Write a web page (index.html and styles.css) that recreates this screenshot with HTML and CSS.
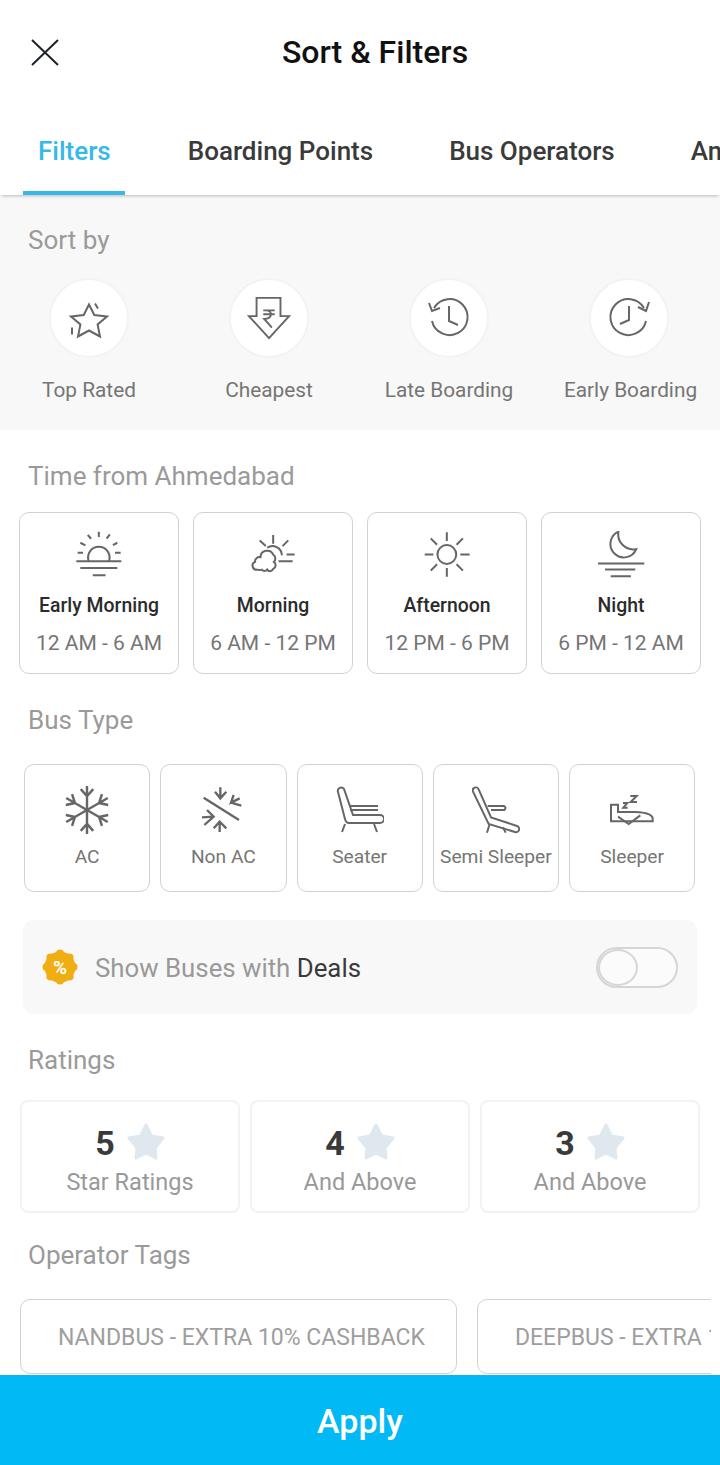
FILE: index.html
```html
<!DOCTYPE html>
<html lang="en">
<head>
    <meta charset="UTF-8">
    <meta name="viewport" content="width=device-width, initial-scale=1.0">
    <title>Sort &amp; Filters</title>
    <link rel="stylesheet" href="styles.css">
</head>
<body>
    <!-- Top bar -->
    <div class="top-bar">
        <svg class="close-icon" viewBox="0 0 28 27"><path d="M1 1 L27 26 M27 1 L1 26"/></svg>
        <h1>Sort &amp; Filters</h1>
    </div>

    <div class="tabs">
        <div class="tab active">Filters</div>
        <div class="tab">Boarding Points</div>
        <div class="tab">Bus Operators</div>
        <div class="tab">Amenities</div>
    </div>

    <!-- Sort by -->
    <div class="sort-section">
        <div class="label">Sort by</div>
        <div class="sort-row">
            <div class="sort-item">
                <div class="circle">
                    <svg class="line-icon thin" viewBox="-3 -3.5 44 44"><path d="M19 5 L24.3 15.5 L37 17 L27.6 25 L30 37 L19 31 L8 37 L10.4 25 L1 17 L13.7 15.5 Z"/><path d="M25 4 L28 9 M2 28 L2 35"/></svg>
                </div>
                <span>Top Rated</span>
            </div>
            <div class="sort-item">
                <div class="circle">
                    <svg class="line-icon thin" viewBox="0 0 46 46"><path d="M10 2 H35 V21 H44 L23 44 L2 21 H10 Z"/><path d="M17 15 H29 M17 19 H29 M20 15 C27 15 27 24 18 24 L26 33"/></svg>
                </div>
                <span>Cheapest</span>
            </div>
            <div class="sort-item">
                <div class="circle">
                    <svg class="line-icon thin" viewBox="-1 -1 44 44"><path d="M6 11 A18 18 0 1 1 4 24"/><path d="M1 6 L4 14 L12 11"/><path d="M21 9 V24 L30 28"/></svg>
                </div>
                <span>Late Boarding</span>
            </div>
            <div class="sort-item">
                <div class="circle">
                    <svg class="line-icon thin" viewBox="-1 -1 44 44"><path d="M36 11 A18 18 0 1 0 38 24"/><path d="M41 5 L38 14 L30 10"/><path d="M21 9 V23 L12 27"/></svg>
                </div>
                <span>Early Boarding</span>
            </div>
        </div>
    </div>

    <!-- Time -->
    <div class="label time-label">Time from Ahmedabad</div>
    <div class="time-row">
        <div class="time-card">
            <svg class="line-icon" viewBox="227 80 140 140"><path d="M265 170 A32 32 0 1 1 325 170"/><path d="M228 170 H362 M240 190 H350 M277 212 H315 M295 82 V98 M262 92 L272 103 M328 90 L318 103 M240 115 L255 123 M350 115 L337 122 M232 145 H248 M343 145 H360"/></svg>
            <div class="time-name">Early Morning</div>
            <div class="time-hours">12 AM - 6 AM</div>
        </div>
        <div class="time-card">
            <svg class="line-icon" viewBox="751 80 140 140"><path d="M802 130 A28 28 0 0 1 846 152 M820 92 V118 M780 108 L798 125 M865 108 L848 125 M860 150 H884 M836 170 H878"/><path d="M772 195 A12 12 0 0 1 766 172 A13 13 0 0 1 782 158 A20 20 0 0 1 820 150 A14 14 0 0 1 822 172 A12 12 0 0 1 820 193 A10 10 0 0 1 802 195 A10 10 0 0 1 786 195 Q780 197 772 195 Z"/></svg>
            <div class="time-name">Morning</div>
            <div class="time-hours">6 AM - 12 PM</div>
        </div>
        <div class="time-card">
            <svg class="line-icon" viewBox="190 78 140 140"><circle cx="258" cy="148" r="28"/><path d="M258 82 V108 M258 188 V214 M192 148 H218 M298 148 H326 M210 100 L229 119 M306 100 L287 119 M210 196 L229 177 M306 196 L287 177"/></svg>
            <div class="time-name">Afternoon</div>
            <div class="time-hours">12 PM - 6 PM</div>
        </div>
        <div class="time-card">
            <svg class="line-icon" viewBox="714 80 140 140"><path d="M775 82 A40 40 0 1 0 828 134 A45 45 0 0 1 775 82 Z"/><path d="M712 177 H852 M735 195 H825 M752 215 H812"/></svg>
            <div class="time-name">Night</div>
            <div class="time-hours">6 PM - 12 AM</div>
        </div>
    </div>

    <!-- Bus type -->
    <div class="label bus-label">Bus Type</div>
    <div class="bus-row">
        <div class="bus-card">
            <svg class="bus-icon line-icon heavy" viewBox="-69 -69 138 138">
                <g id="flake"><path d="M0 0 V-69 M-18 -60 L0 -40 L18 -60"/></g>
                <use href="#flake" transform="rotate(60)"/>
                <use href="#flake" transform="rotate(120)"/>
                <use href="#flake" transform="rotate(180)"/>
                <use href="#flake" transform="rotate(240)"/>
                <use href="#flake" transform="rotate(300)"/>
            </svg>
            <span>AC</span>
        </div>
        <div class="bus-card">
            <svg class="bus-icon line-icon heavy" viewBox="568 78 144 144"><path d="M582 113 L688 180 M632 82 V118 M616 95 L632 115 L650 95 M630 216 V182 M612 205 L630 185 L650 205 M695 137 L664 128 M672 105 L664 128 L690 115 M577 172 L612 170 M584 195 L612 170 L592 150"/></svg>
            <span>Non AC</span>
        </div>
        <div class="bus-card">
            <svg class="bus-icon line-icon seat" viewBox="334 787 48 48"><path d="M336 793 A3.4 3.4 0 0 1 342 790 L351 816 H378 A4 4 0 0 1 378 824 H347 Q344 824 343 820 Z"/><path d="M347 807 H376 M348 811 H376"/><path d="M343 825 L340 833 M372 825 L375 833"/></svg>
            <span>Seater</span>
        </div>
        <div class="bus-card">
            <svg class="bus-icon line-icon" viewBox="335 78 144 144"><path d="M338 95 A9 9 0 0 1 355 88 L392 172 L470 198 A8 8 0 0 1 464 216 L385 192 Z"/><path d="M382 138 H430 Q440 142 432 150 H392"/><path d="M387 195 L380 218 M428 202 L436 218"/></svg>
            <span>Semi Sleeper</span>
        </div>
        <div class="bus-card">
            <svg class="bus-icon line-icon" viewBox="748 80 144 144"><path d="M757 136 H778 V158 H830 Q878 160 882 176 V186 H757 Z"/><path d="M778 172 L810 194 L845 168"/><path d="M793 131 H806 L794 145 H807 M815 110 H834 L816 128 H835"/></svg>
            <span>Sleeper</span>
        </div>
    </div>

    <!-- Deals -->
    <div class="deals">
        <svg class="deal-badge" viewBox="-18 -18 36 36">
            <circle r="15.5"/>
            <circle cy="-13.5" r="4"/><circle cy="13.5" r="4"/><circle cx="-13.5" r="4"/><circle cx="13.5" r="4"/>
            <circle cx="-9.6" cy="-9.6" r="4"/><circle cx="9.6" cy="-9.6" r="4"/><circle cx="-9.6" cy="9.6" r="4"/><circle cx="9.6" cy="9.6" r="4"/>
            <text y="6.5" text-anchor="middle">%</text>
        </svg>
        <div class="deal-text">Show Buses with <b>Deals</b></div>
        <div class="toggle"><div class="knob"></div></div>
    </div>

    <!-- Ratings -->
    <div class="label ratings-label">Ratings</div>
    <div class="rating-row">
        <div class="rating-card">
            <div class="rating-num">5 <svg class="star" viewBox="0 0 38 37"><path d="M19 2 L24.5 13 L36 15 L28 25 L29 35 L19 30 L9 35 L10 25 L2 15 L13.5 13 Z"/></svg></div>
            <div class="rating-text">Star Ratings</div>
        </div>
        <div class="rating-card">
            <div class="rating-num">4 <svg class="star" viewBox="0 0 38 37"><path d="M19 2 L24.5 13 L36 15 L28 25 L29 35 L19 30 L9 35 L10 25 L2 15 L13.5 13 Z"/></svg></div>
            <div class="rating-text">And Above</div>
        </div>
        <div class="rating-card">
            <div class="rating-num">3 <svg class="star" viewBox="0 0 38 37"><path d="M19 2 L24.5 13 L36 15 L28 25 L29 35 L19 30 L9 35 L10 25 L2 15 L13.5 13 Z"/></svg></div>
            <div class="rating-text">And Above</div>
        </div>
    </div>

    <!-- Operator tags -->
    <div class="label tags-label">Operator Tags</div>
    <div class="tag-row">
        <div class="tag">NANDBUS - EXTRA 10% CASHBACK</div>
        <div class="tag">DEEPBUS - EXTRA 10% CASHBACK</div>
    </div>

    <div class="apply">Apply</div>
</body>
</html>
```

FILE: styles.css
```css
* {
    box-sizing: border-box;
}
html, body {
    margin: 0;
    padding: 0;
}
body {
    width: 720px;
    height: 1465px;
    overflow: hidden;
    background-color: #fff;
    font-family: Roboto, "Noto Sans", sans-serif;
}
.top-bar {
    height: 104px;
    display: flex;
    align-items: center;
    justify-content: center;
    position: relative;
}
.top-bar h1 {
    margin: 0 0 0 30px;
    font-size: 32px;
    font-weight: 500;
    color: #111;
}
.close-icon {
    position: absolute;
    left: 31px;
    top: 39px;
    width: 28px;
    height: 27px;
    fill: none;
    stroke: #1d2228;
    stroke-width: 2;
}
.tabs {
    height: 91px;
    padding-left: 23px;
    display: flex;
    gap: 46px;
    overflow: hidden;
    position: relative;
    box-shadow: 0 3px 3px -2px rgba(0, 0, 0, 0.25);
    white-space: nowrap;
}
.tab {
    padding: 32px 15px 0;
    font-size: 26px;
    line-height: 30px;
    font-weight: 500;
    color: #3a3a3a;
}
.tab.active {
    padding-right: 14px;
    margin-right: 2px;
    color: #36b8ea;
    border-bottom: 4px solid #36b8ea;
}
.label {
    padding-left: 28px;
    font-size: 26px;
    line-height: 31px;
    color: #9a9a9a;
}
.sort-section {
    height: 235px;
    padding-top: 30px;
    background-color: #f8f8f8;
}
.sort-row {
    margin-top: 22px;
    display: grid;
    grid-template-columns: repeat(4, 178px);
    gap: 2px;
}
.sort-item {
    display: flex;
    flex-direction: column;
    align-items: center;
    font-size: 20.8px;
    line-height: 30px;
    color: #757575;
    white-space: nowrap;
}
.sort-item span {
    margin-top: 17px;
}
.sort-item:last-child span {
    margin-left: 3px;
}
.circle {
    width: 80px;
    height: 80px;
    border-radius: 50%;
    background-color: #fff;
    border: 2px solid #f3f3f3;
    display: flex;
    align-items: center;
    justify-content: center;
}
.circle svg {
    width: 44px;
    height: 44px;
}
.line-icon {
    fill: none;
    stroke: #666;
    stroke-width: 6;
}
.line-icon.thin {
    stroke-width: 2;
}
.line-icon.heavy {
    stroke-width: 7;
}
.line-icon.seat {
    stroke-width: 2;
}
.time-label {
    margin-top: 31px;
}
.time-row {
    margin-top: 20px;
    padding: 0 19px;
    display: flex;
    gap: 14px;
}
.time-card {
    width: 160px;
    height: 162px;
    padding-top: 18px;
    border: 1px solid #d2d2d2;
    border-radius: 10px;
    display: flex;
    flex-direction: column;
    align-items: center;
}
.time-card svg {
    width: 47px;
    height: 47px;
}
.time-name {
    margin-top: 16px;
    font-size: 19.4px;
    line-height: 24px;
    font-weight: 500;
    color: #2b2b2b;
}
.time-hours {
    margin-top: 11px;
    font-size: 21px;
    line-height: 28px;
    color: #757575;
}
.bus-label {
    margin-top: 31px;
}
.bus-row {
    margin-top: 28px;
    padding: 0 24px;
    display: flex;
    gap: 10px;
}
.bus-card {
    flex: none;
    width: 126.25px;
    height: 128px;
    padding-top: 21px;
    border: 1px solid #d2d2d2;
    border-radius: 10px;
    display: flex;
    flex-direction: column;
    align-items: center;
    font-size: 19.2px;
    line-height: 24px;
    color: #757575;
    white-space: nowrap;
}
.bus-icon {
    width: 48px;
    height: 48px;
}
.bus-card span {
    margin-top: 11px;
}
.deals {
    margin: 28px 23px 0;
    height: 94px;
    padding: 0 19px;
    background-color: #f8f8f8;
    border-radius: 10px;
    display: flex;
    align-items: center;
}
.deal-badge {
    width: 36px;
    height: 36px;
    fill: #f0ae13;
}
.deal-badge text {
    fill: #fff;
    font-size: 19px;
    font-weight: 700;
}
.deal-text {
    margin-left: 17px;
    padding-top: 2px;
    flex: 1;
    font-size: 25.8px;
    color: #999;
}
.deal-text b {
    font-weight: 400;
    color: #3a3a3a;
}
.toggle {
    width: 82px;
    height: 41px;
    border: 2px solid #d6d6d6;
    border-radius: 21px;
    background-color: #fbfbfb;
}
.knob {
    width: 40px;
    height: 37px;
    border: 2px solid #d6d6d6;
    border-radius: 50%;
    background-color: #fbfbfb;
}
.ratings-label {
    margin-top: 31px;
}
.rating-row {
    margin-top: 24px;
    padding: 0 20px;
    display: flex;
    gap: 10px;
}
.rating-card {
    width: 220px;
    height: 113px;
    padding-top: 19px;
    border: 2px solid #f2f2f2;
    border-radius: 8px;
    text-align: center;
}
.rating-num {
    display: flex;
    align-items: center;
    justify-content: center;
    gap: 12px;
    height: 44px;
    font-size: 34px;
    font-weight: 700;
    color: #3a3a3a;
}
.star {
    width: 38px;
    height: 37px;
    margin-top: -4px;
    fill: #dfe7ef;
    stroke: #dfe7ef;
    stroke-width: 3;
    stroke-linejoin: round;
}
.rating-text {
    margin-top: 2px;
    font-size: 23.5px;
    line-height: 30px;
    color: #999;
}
.tags-label {
    margin-top: 27px;
}
.tag-row {
    margin: 28px 9px 0 20px;
    display: flex;
    gap: 20px;
    overflow: hidden;
}
.tag {
    flex: none;
    height: 75px;
    padding: 2px 31px 0 37px;
    border: 1px solid #d2d2d2;
    border-radius: 10px;
    display: flex;
    align-items: center;
    font-size: 23px;
    color: #9e9e9e;
    white-space: nowrap;
}
.apply {
    margin-top: 1px;
    height: 90px;
    padding-top: 2px;
    background-color: #00b9f5;
    color: #fff;
    font-size: 34px;
    font-weight: 500;
    display: flex;
    align-items: center;
    justify-content: center;
}
```
